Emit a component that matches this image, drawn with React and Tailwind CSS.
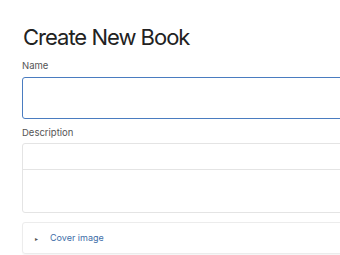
export default function App() {
  return (
    <div className="w-[340px] h-[255px] overflow-hidden bg-white" style={{ fontFamily: 'Inter, "Noto Sans", sans-serif' }}>
      <div className="w-[480px] pl-[22px] pt-[22px]">
        <h1 className="text-[22px] leading-[30px] text-[#222] tracking-[-1px] pl-[1px]">Create New Book</h1>
        <label className="block mt-[8px] text-[9.5px] leading-[12px] text-[#555]">Name</label>
        <input className="block mt-[5px] w-full h-[42px] rounded-[3px] border-[1.5px] border-[#4a7cc0] outline-none" />
        <label className="block mt-[8px] text-[9.5px] leading-[12px] text-[#555]">Description</label>
        <div className="mt-[4px] h-[70px] rounded-[3px] border border-[#e4e4e4] flex flex-col">
          <div className="h-[26px] border-b border-[#e4e4e4]" />
          <div className="flex-1" />
        </div>
        <div className="mt-[9px] h-[32px] rounded-[3px] border border-[#ececec] shadow-[0_1px_1px_rgba(0,0,0,0.04)] flex items-center pl-[12px]">
          <span className="text-[6px] text-[#555] mr-[12px]">▸</span>
          <span className="text-[9px] text-[#3d6ea8]">Cover image</span>
        </div>
      </div>
    </div>
  );
}
